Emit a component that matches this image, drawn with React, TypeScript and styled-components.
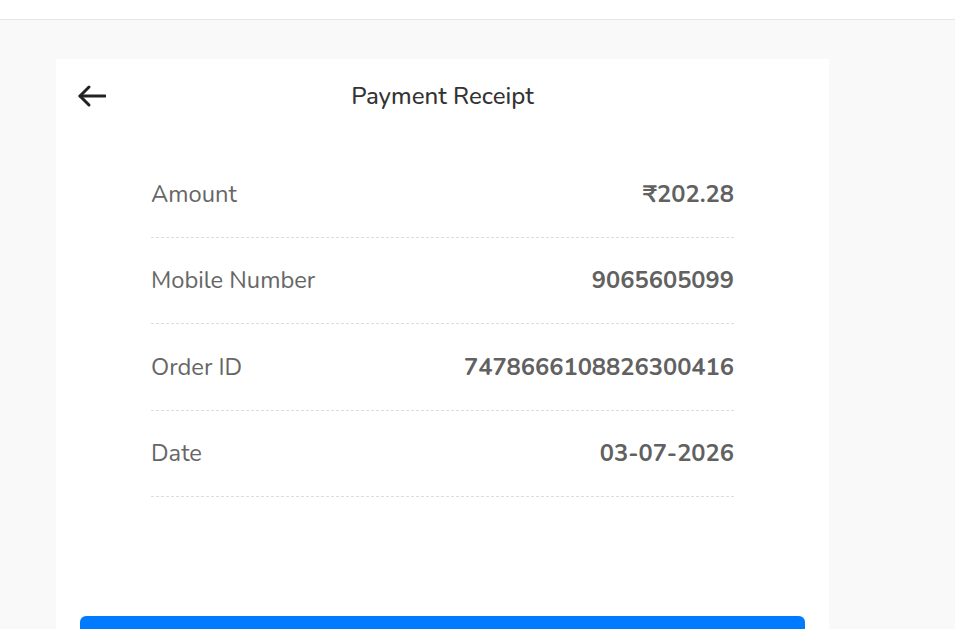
import React from 'react'
import styled, { createGlobalStyle } from 'styled-components'

const GlobalStyle = createGlobalStyle`
  html, body {
    margin: 0;
    padding: 0;
    background: #f9f9f9;
    font-family: 'Nunito', 'Lato', sans-serif;
    overflow: hidden;
  }
  * {
    box-sizing: border-box;
  }
`

const receipt = [
  { label: 'Amount', value: '₹202.28' },
  { label: 'Mobile Number', value: '9065605099' },
  { label: 'Order ID', value: '7478666108826300416' },
  { label: 'Date', value: '03-07-2026' }
]

const TopBar = styled.header`
  height: 20px;
  background: #ffffff;
  border-bottom: 1px solid #e6e6e6;
`

const Page = styled.main`
  padding: 39px 0 0 56px;
`

const Card = styled.section`
  width: 773px;
  min-height: 640px;
  background: #ffffff;
  padding: 16px 24px;
`

const CardHeader = styled.div`
  position: relative;
  height: 42px;
  display: flex;
  align-items: center;
  justify-content: center;
`

const BackButton = styled.button`
  position: absolute;
  left: -4px;
  top: 50%;
  transform: translateY(-50%);
  display: flex;
  padding: 0;
  border: none;
  background: none;
  color: #222222;
  cursor: pointer;
`

const Title = styled.h1`
  margin: 0;
  font-size: 24px;
  font-weight: 500;
  color: #333333;
`

const Rows = styled.dl`
  margin: 34px 0 0;
  padding: 0 71px;
`

const Row = styled.div`
  height: 86.5px;
  display: flex;
  align-items: center;
  justify-content: space-between;
  border-bottom: 1px dashed #dddddd;
`

const Label = styled.dt`
  font-size: 23.7px;
  color: #666666;
`

const Value = styled.dd`
  margin: 0;
  font-size: 23.7px;
  font-weight: 700;
  color: #616161;
`

const PayButton = styled.button`
  display: block;
  width: 100%;
  height: 48px;
  margin-top: 119px;
  border: none;
  border-radius: 6px;
  background: #007bff;
  color: #ffffff;
  font-family: inherit;
  font-size: 18px;
`

const ArrowLeft = () => (
  <svg width="30" height="26" viewBox="0 0 30 26" fill="none" stroke="currentColor" strokeWidth="3" strokeLinecap="round" strokeLinejoin="round">
    <path d="M29 13H4" />
    <path d="M13 4L4 13L13 22" />
  </svg>
)

export default function App() {
  return (
    <>
      <GlobalStyle />
      <TopBar />
      <Page>
        <Card>
          <CardHeader>
            <BackButton aria-label="Back">
              <ArrowLeft />
            </BackButton>
            <Title>Payment Receipt</Title>
          </CardHeader>
          <Rows>
            {receipt.map(r => (
              <Row key={r.label}>
                <Label>{r.label}</Label>
                <Value>{r.value}</Value>
              </Row>
            ))}
          </Rows>
          <PayButton />
        </Card>
      </Page>
    </>
  )
}
